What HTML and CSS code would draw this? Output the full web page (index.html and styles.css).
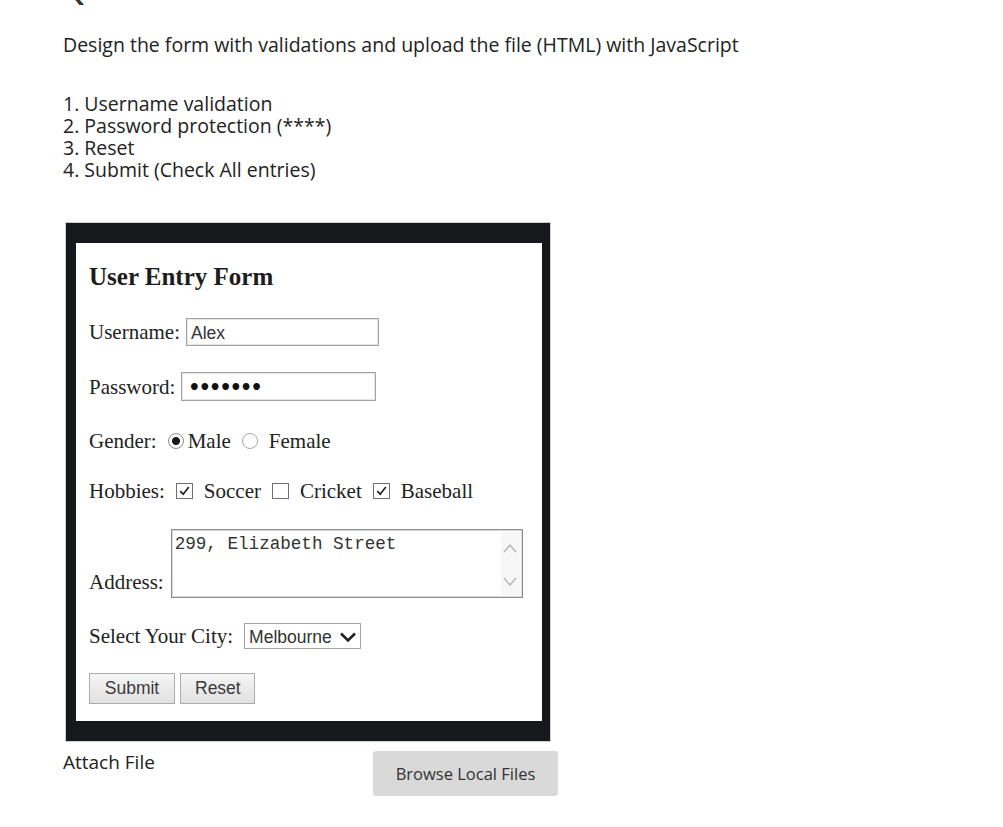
FILE: index.html
```html
<!DOCTYPE html>
<html lang="en">
<head>
<meta charset="utf-8">
<title>Question</title>
<link rel="stylesheet" href="styles.css">
</head>
<body>
<main class="page">
  <h2 class="q-title">Question</h2>
  <p class="intro">Design the form with validations and upload the file (HTML) with JavaScript</p>
  <ol class="tasks">
    <li>1. Username validation</li>
    <li>2. Password protection (****)</li>
    <li>3. Reset</li>
    <li>4. Submit (Check All entries)</li>
  </ol>
  <figure class="shot">
    <form class="entry">
      <h3 class="entry-title">User Entry Form</h3>
      <div class="row row-user">
        <label class="lbl" for="u">Username:</label>
        <input class="field field-user" id="u" type="text" value="Alex">
      </div>
      <div class="row row-pass">
        <label class="lbl" for="p">Password:</label>
        <input class="field field-pass" id="p" type="password" value="1234567">
      </div>
      <div class="row row-gender">
        <span class="lbl">Gender:</span>
        <span class="radio radio-on"></span><span class="opt opt-male">Male</span>
        <span class="radio"></span><span class="opt">Female</span>
      </div>
      <div class="row row-hobby">
        <span class="lbl">Hobbies:</span>
        <span class="check"><svg viewBox="0 0 16 16" width="16" height="16"><path d="M3.5 8.2 L6.6 11.4 L12.6 3.8" fill="none" stroke="#222" stroke-width="1.8"/></svg></span><span class="opt">Soccer</span>
        <span class="check"></span><span class="opt">Cricket</span>
        <span class="check"><svg viewBox="0 0 16 16" width="16" height="16"><path d="M3.5 8.2 L6.6 11.4 L12.6 3.8" fill="none" stroke="#222" stroke-width="1.8"/></svg></span><span class="opt">Baseball</span>
      </div>
      <div class="row row-addr">
        <span class="lbl lbl-addr">Address:</span>
        <div class="textarea">
          <div class="ta-text">299, Elizabeth Street</div>
          <div class="ta-scroll">
            <svg viewBox="0 0 16 14" width="16" height="14"><path d="M2 11 L8 4 L14 11" fill="none" stroke="#b4b4b4" stroke-width="1.4"/></svg>
            <svg viewBox="0 0 16 14" width="16" height="14"><path d="M2 3 L8 10 L14 3" fill="none" stroke="#b4b4b4" stroke-width="1.4"/></svg>
          </div>
        </div>
      </div>
      <div class="row row-city">
        <span class="lbl">Select Your City:</span>
        <div class="select">
          <span class="sel-text">Melbourne</span>
          <svg viewBox="0 0 18 12" width="18" height="12"><path d="M2 2.5 L9 9.5 L16 2.5" fill="none" stroke="#222" stroke-width="2.6"/></svg>
        </div>
      </div>
      <div class="row row-btns">
        <button type="button" class="btn">Submit</button>
        <button type="reset" class="btn">Reset</button>
      </div>
    </form>
  </figure>
  <div class="attach">
    <span class="attach-label">Attach File</span>
    <button type="button" class="browse">Browse Local Files</button>
  </div>
</main>
</body>
</html>
```

FILE: styles.css
```css
* { box-sizing: border-box; }

body {
  margin: 0;
  background: #fff;
  color: #222;
  font-family: "Open Sans", sans-serif;
}

.page {
  padding: 0 0 0 63px;
}

.q-title {
  margin: -29px 0 0;
  font-size: 30px;
  line-height: 36px;
  font-weight: 600;
  color: #333;
}

.intro {
  margin: 26px 0 0;
  font-size: 19.5px;
  line-height: 24px;
}

.tasks {
  list-style: none;
  margin: 36px 0 0;
  padding: 0;
  font-size: 19.5px;
  line-height: 22px;
}

.shot {
  margin: 42px 0 0 3px;
  width: 484px;
  border-style: solid;
  border-color: #17181c;
  border-width: 20px 8px 20px 10px;
  box-shadow: 0 0 0 1px #cfcfcf;
  background: #fff;
}

.entry {
  padding: 0 13px 17px;
  font-family: "Liberation Serif", "Times New Roman", serif;
  font-size: 21px;
  line-height: 24px;
  color: #222;
}

.entry-title {
  margin: 0;
  padding-top: 19px;
  font-size: 25px;
  line-height: 30px;
  font-weight: bold;
  color: #1c1c1c;
}

.row {
  display: flex;
  align-items: center;
}

.row-user { margin-top: 26px; height: 28px; }
.row-pass { margin-top: 26px; height: 29px; }
.row-gender { margin-top: 28px; height: 24px; }
.row-hobby { margin-top: 26px; height: 24px; }
.row-addr { margin-top: 26px; align-items: flex-end; }
.row-city { margin-top: 25px; height: 26px; }
.row-btns { margin-top: 24px; gap: 5px; }

.lbl {
  color: #222;
}

.field {
  height: 100%;
  margin-left: 6px;
  border: 1px solid #a3a3a3;
  box-shadow: inset 0 0 0 1px #e6e6e6;
  padding: 2px 4px 0;
  font-family: "Liberation Sans", Arial, sans-serif;
  font-size: 17.5px;
  color: #333;
  background: #fff;
  outline: none;
}

.field-user { width: 193px; }

.field-pass {
  width: 195px;
  margin-left: 6px;
  padding: 0 4px 0 6px;
  font-size: 19px;
  letter-spacing: -1.8px;
  color: #111;
  font-family: "DejaVu Sans", sans-serif;
  font-weight: bold;
}

.radio {
  width: 16px;
  height: 16px;
  border: 1px solid #a8a8a8;
  border-radius: 50%;
  background: #fff;
  margin-left: 11px;
  flex: none;
}

.radio-on {
  border-color: #8a8a8a;
  background: radial-gradient(circle, #1a1a1a 0 3.6px, #fff 4.4px);
}

.opt { margin-left: 11px; }
.opt-male { margin-left: 4px; }

.check {
  width: 17px;
  height: 16px;
  border: 1px solid #707070;
  background: #fff;
  margin-left: 11px;
  flex: none;
  display: flex;
  align-items: center;
  justify-content: center;
}

.check svg { display: block; }

.row-hobby .check:first-of-type { margin-left: 12px; }

.lbl-addr {
  margin-bottom: 4px;
}

.textarea {
  margin-left: 7px;
  width: 352px;
  height: 69px;
  border: 1px solid #8e8e8e;
  box-shadow: inset 0 0 0 1px #dadada;
  display: flex;
  background: #fff;
}

.ta-text {
  flex: 1;
  padding: 5px 0 0 3px;
  font-family: "Liberation Mono", "Courier New", monospace;
  font-size: 17.6px;
  line-height: 18px;
  color: #333;
}

.ta-scroll {
  width: 19px;
  margin: 2px 2px 2px 0;
  background: #f7f7f7;
  display: flex;
  flex-direction: column;
  justify-content: space-between;
  align-items: center;
  padding: 9px 0 6px;
}

.ta-scroll svg { display: block; }

.select {
  margin-left: 11px;
  height: 100%;
  width: 117px;
  border: 1px solid #a5a5a5;
  display: flex;
  align-items: center;
  justify-content: space-between;
  padding: 1px 3px 0 4px;
  font-family: "Liberation Sans", Arial, sans-serif;
  font-size: 17.5px;
  color: #333;
  background: #fff;
}

.select svg { display: block; }

.btn {
  height: 31px;
  padding: 0 14px;
  border: 1px solid #adadad;
  background: linear-gradient(#f5f5f5, #e1e1e1);
  font-family: "Liberation Sans", Arial, sans-serif;
  font-size: 17.5px;
  color: #3a3a3a;
  margin: 0;
}

.btn:first-child { width: 86px; }
.btn:last-child { width: 75px; }

.attach {
  margin-top: 10px;
  display: flex;
  align-items: flex-start;
}

.attach-label {
  width: 310px;
  font-size: 19px;
  line-height: 22px;
  color: #222;
}

.browse {
  width: 185px;
  height: 45px;
  border: none;
  border-radius: 3px;
  background: #d9d9d9;
  font-family: "Open Sans", sans-serif;
  font-size: 16.5px;
  color: #333;
  padding: 0;
  margin: 0;
}
```
